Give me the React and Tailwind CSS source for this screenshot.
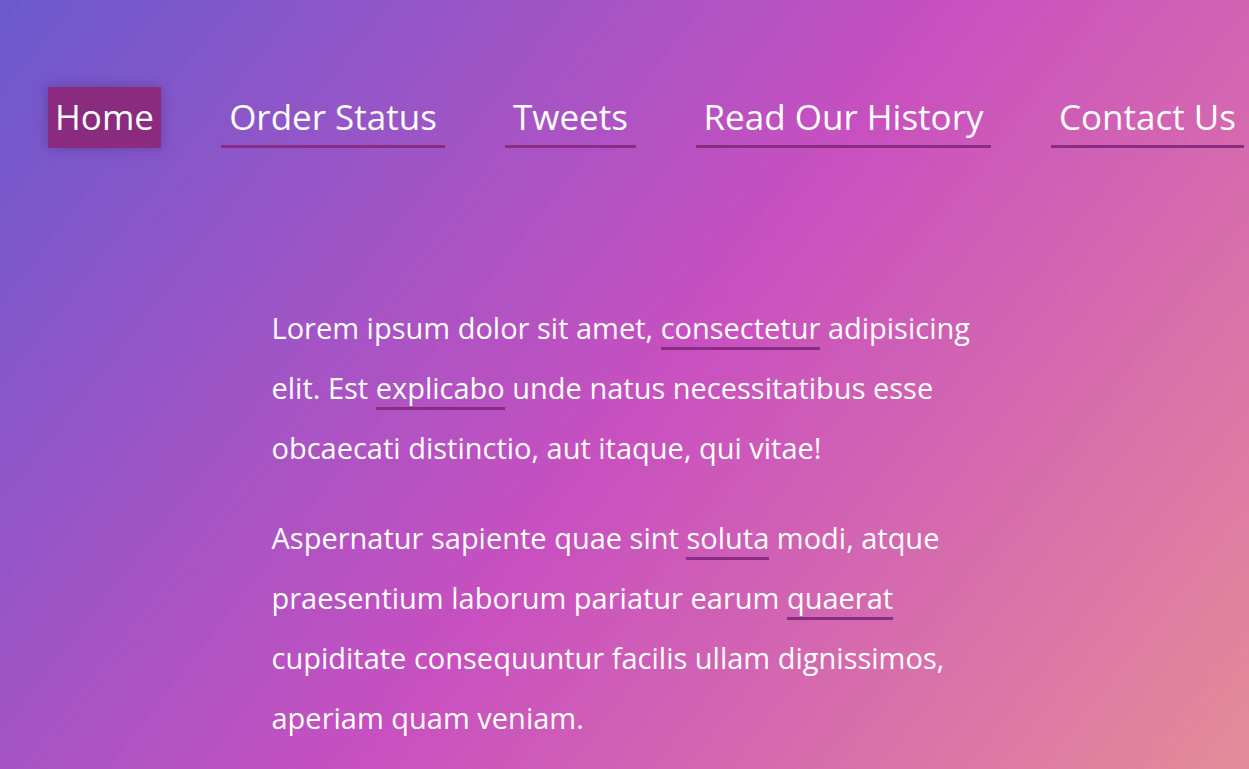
import React from 'react'

const navItems = [
    { label: 'Home', active: true, w: 'w-[113px]' },
    { label: 'Order Status', w: 'w-[224px]' },
    { label: 'Tweets', w: 'w-[131px]' },
    { label: 'Read Our History', w: 'w-[295px]' },
    { label: 'Contact Us', w: 'w-[193px]' },
]

const Link = ({ children }) => (
    <a href="#" className="border-b-[3px] border-[#8a2b84] text-white no-underline">{children}</a>
)

export default function App() {
    return (
        <div
            className="min-h-[769px] w-full overflow-hidden bg-[linear-gradient(128deg,#6a5acd_0%,#c850c0_52%,#e58b98_100%)] text-white"
            style={{ fontFamily: '"Open Sans", Lato, sans-serif' }}
        >
            <nav className="pt-[87px] pl-[48px]">
                <ul className="flex gap-[60px] whitespace-nowrap">
                    {navItems.map((item) => (
                        <li key={item.label}>
                            <a
                                href="#"
                                className={`block ${item.w} shrink-0 pt-[8px] pb-[7px] text-center text-[35px] leading-[43px] border-b-[3px] border-[#8a2b84] ${
                                    item.active ? 'bg-[#8a2b80] shadow-[0_0_12px_rgba(60,20,90,0.35)]' : ''
                                }`}
                            >
                                {item.label}
                            </a>
                        </li>
                    ))}
                </ul>
            </nav>

            <main className="mx-auto mt-[150px] w-[706px] whitespace-nowrap text-[29px] leading-[60px]">
                <p>
                    Lorem ipsum dolor sit amet, <Link>consectetur</Link> adipisicing<br />
                    elit. Est <Link>explicabo</Link> unde natus necessitatibus esse<br />
                    obcaecati distinctio, aut itaque, qui vitae!
                </p>
                <p className="mt-[30px]">
                    Aspernatur sapiente quae sint <Link>soluta</Link> modi, atque<br />
                    praesentium laborum pariatur earum <Link>quaerat</Link><br />
                    cupiditate consequuntur facilis ullam dignissimos,<br />
                    aperiam quam veniam.
                </p>
            </main>
        </div>
    )
}
